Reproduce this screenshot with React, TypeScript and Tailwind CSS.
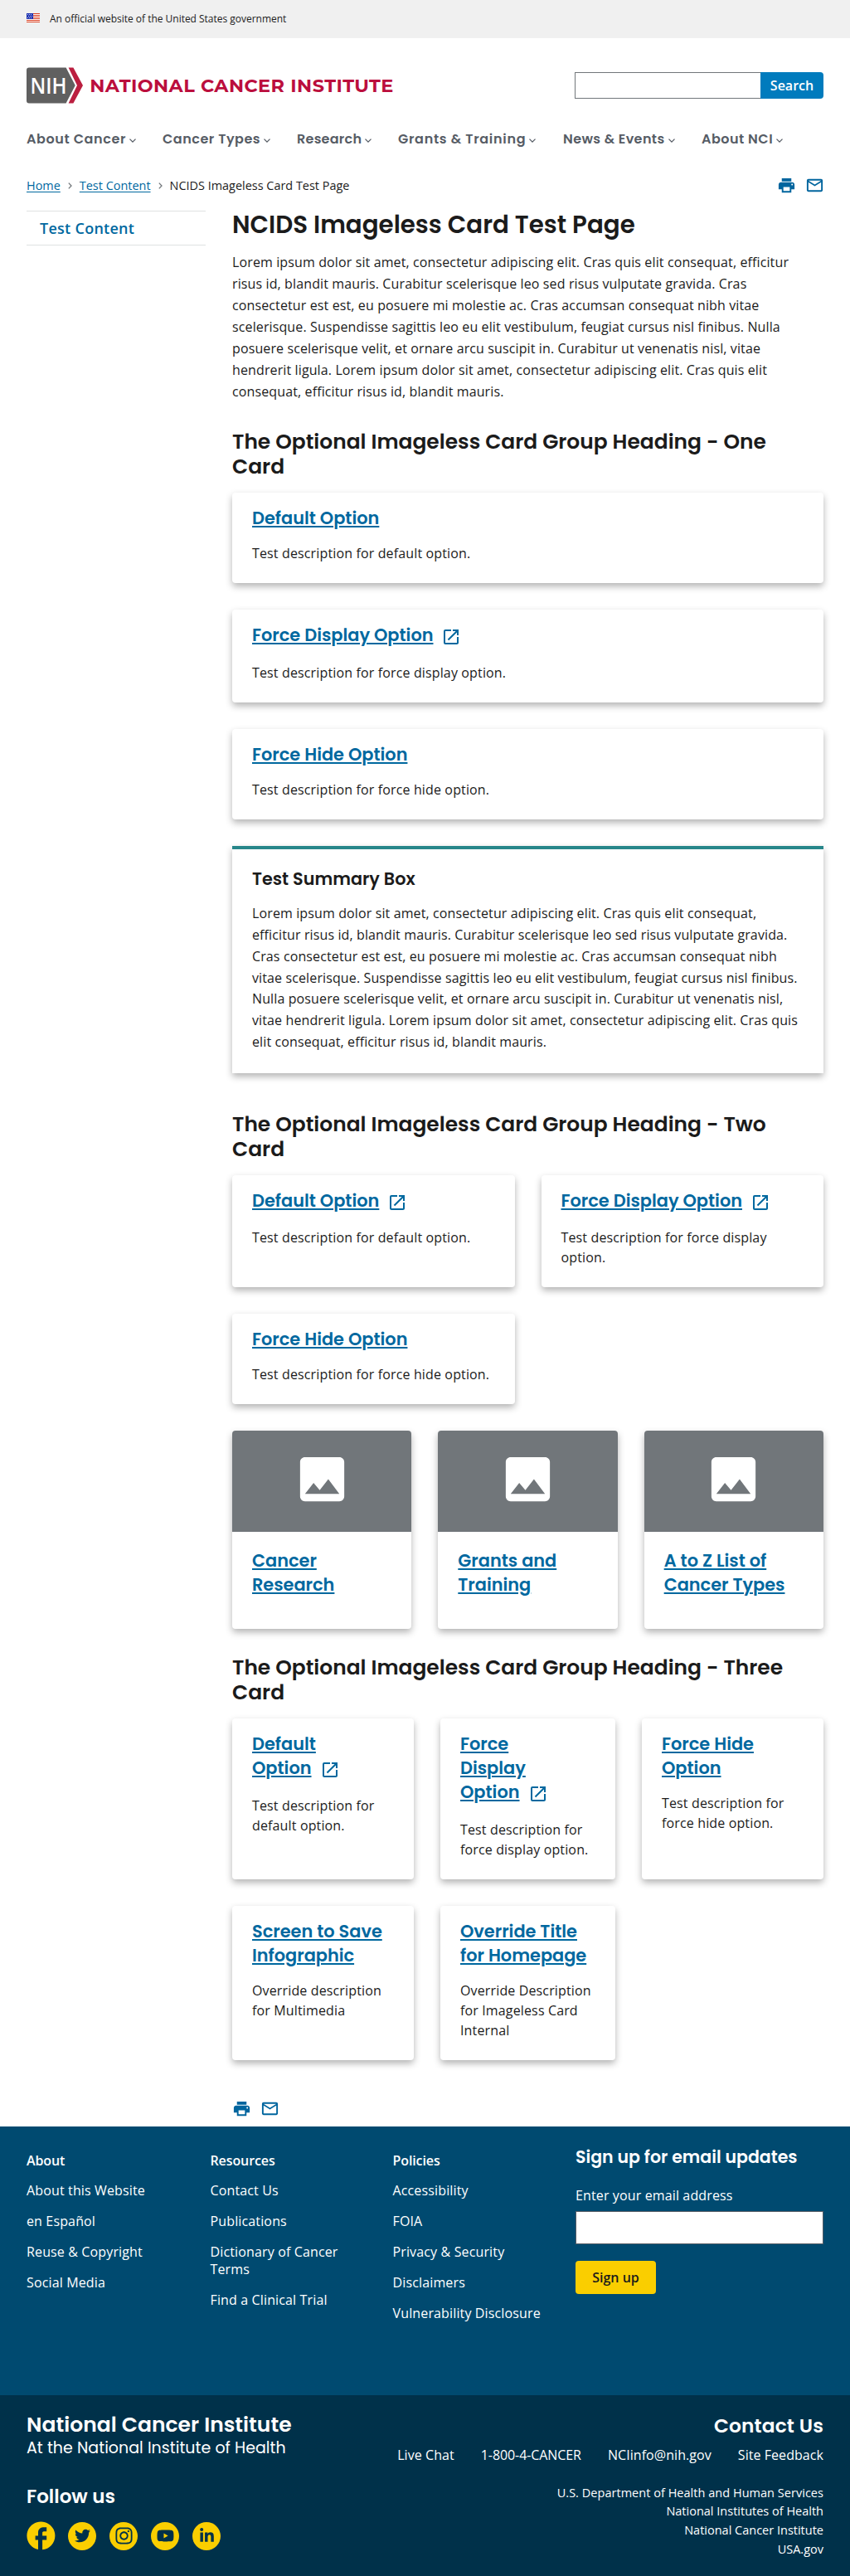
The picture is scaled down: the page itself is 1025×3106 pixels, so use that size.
import type { ReactNode } from "react";
import { MdPrint, MdMailOutline, MdLaunch, MdImage, MdFacebook } from "react-icons/md";
import { FaTwitter, FaInstagram, FaYoutube, FaLinkedinIn } from "react-icons/fa";

const LOREM =
  "Lorem ipsum dolor sit amet, consectetur adipiscing elit. Cras quis elit consequat, efficitur risus id, blandit mauris. Curabitur scelerisque leo sed risus vulputate gravida. Cras consectetur est est, eu posuere mi molestie ac. Cras accumsan consequat nibh vitae scelerisque. Suspendisse sagittis leo eu elit vestibulum, feugiat cursus nisl finibus. Nulla posuere scelerisque velit, et ornare arcu suscipit in. Curabitur ut venenatis nisl, vitae hendrerit ligula. Lorem ipsum dolor sit amet, consectetur adipiscing elit. Cras quis elit consequat, efficitur risus id, blandit mauris.";

const NAV = [
  { label: "About Cancer", cls: "w-[164px] tracking-[0.6px]" },
  { label: "Cancer Types", cls: "w-[162px] tracking-[0.52px]" },
  { label: "Research", cls: "w-[122px] tracking-[0.25px]" },
  { label: "Grants & Training", cls: "w-[199px] tracking-[0.68px]" },
  { label: "News & Events", cls: "w-[167px] tracking-[0.4px]" },
  { label: "About NCI", cls: "w-[110px] tracking-[0.5px]" },
];

function Flag() {
  return (
    <svg width="16" height="11" viewBox="0 0 16 11" shapeRendering="crispEdges" aria-hidden="true">
      <rect width="16" height="11" fill="#fff" />
      {[0, 2, 4, 6, 8, 10].map((y) => (
        <rect key={y} y={y} width="16" height="1" fill="#db3e1f" />
      ))}
      <rect width="8" height="7" fill="#1e33b1" />
      {[
        [1, 1], [3, 1], [5, 1], [2, 3], [4, 3], [6, 3], [1, 5], [3, 5], [5, 5],
      ].map(([x, y]) => (
        <rect key={`${x}-${y}`} x={x} y={y} width="1" height="1" fill="#c3c9ee" />
      ))}
    </svg>
  );
}

function Logo() {
  return (
    <svg width="444" height="44" viewBox="0 0 444 44" aria-label="National Cancer Institute">
      <path d="M3 .5H47.6L58.7 22 47.6 43.5H3a3 3 0 0 1-3-3v-37a3 3 0 0 1 3-3Z" fill="#606060" />
      <path d="M50.6 .5H56.4L68 22 56.4 43.5H50.6L61 22Z" fill="#bb1f40" />
      <text x="4.6" y="31.6" fontSize="26.6" fontWeight="600" fill="#fff" textLength="44" lengthAdjust="spacingAndGlyphs" className="font-['Open_Sans',sans-serif]">
        NIH
      </text>
      <text x="76.3" y="29.6" fontSize="22.4" fontWeight="700" fill="#bb0e3d" textLength="366" lengthAdjust="spacing" className="font-['Montserrat',sans-serif]">
        NATIONAL CANCER INSTITUTE
      </text>
    </svg>
  );
}

function PageActions() {
  return (
    <div className="flex gap-[11px] text-[#00659e]">
      <MdPrint className="size-[23px]" />
      <MdMailOutline className="size-[23px]" />
    </div>
  );
}

function Crumb() {
  return (
    <svg width="5" height="8" viewBox="0 0 5 8" className="mx-[9px]" aria-hidden="true">
      <path d="M.8 .6 4 4 .8 7.4" fill="none" stroke="#71767a" strokeWidth="1.3" />
    </svg>
  );
}

function H2({ children, cls }: { children: ReactNode; cls: string }) {
  return (
    <h2 className={`font-['Poppins','Inter',sans-serif] text-[24.95px] leading-[30px] font-semibold ${cls}`}>
      {children}
    </h2>
  );
}

const TITLE_LINK = "text-[#00689f] underline decoration-2 underline-offset-[2px]";

/** Card whose title links out; `lines` holds the title's line breaks. */
function Card({ lines, icon = false, desc }: { lines: string[]; icon?: boolean; desc: ReactNode }) {
  return (
    <div className="rounded bg-white px-6 pt-4 pb-6 shadow-[0_4px_8px_rgba(0,0,0,0.3)]">
      <h3 className="font-['Poppins','Inter',sans-serif] text-[20.87px] leading-[29.1px] font-semibold whitespace-nowrap">
        {lines.map((line, i) => (
          <span key={line} className="block">
            <a className={TITLE_LINK}>{line}</a>
            {icon && i === lines.length - 1 && (
              <MdLaunch className="ml-[10px] inline size-6 align-[-7px] text-[#00689f]" />
            )}
          </span>
        ))}
      </h3>
      <p className={icon ? "mt-[18.4px] leading-6 tracking-[0.14px]" : "mt-4 leading-6 tracking-[0.14px]"}>{desc}</p>
    </div>
  );
}

function FeatureCard({ lines }: { lines: string[] }) {
  return (
    <div className="h-[239px] overflow-hidden rounded bg-white shadow-[0_4px_8px_rgba(0,0,0,0.3)]">
      <div className="flex h-[122px] items-center justify-center bg-[#71767a] pb-[5px]">
        <MdImage className="size-[71px] text-white" />
      </div>
      <h3 className="px-6 pt-[19.5px] font-['Poppins','Inter',sans-serif] text-[20.87px] leading-[29.1px] font-semibold">
        {lines.map((line) => (
          <span key={line} className="block">
            <a className={TITLE_LINK}>{line}</a>
          </span>
        ))}
      </h3>
    </div>
  );
}

function FooterColumn({ title, links, cls }: { title: string; links: string[]; cls: string }) {
  return (
    <div className={cls}>
      <h4 className="leading-[20.8px] font-semibold tracking-[-0.1px]">{title}</h4>
      <ul className="mt-[15.4px] flex flex-col gap-[16.2px] leading-[20.8px] tracking-[0.14px]">
        {links.map((l) => (
          <li key={l}>{l}</li>
        ))}
      </ul>
    </div>
  );
}

function Circle({ children }: { children: ReactNode }) {
  return (
    <span className="flex size-[34px] items-center justify-center rounded-full bg-[#face00] text-[#00314a]">
      {children}
    </span>
  );
}

export default function App() {
  return (
    <div className="flex h-[3106px] w-[1025px] flex-col overflow-hidden bg-white font-['Open_Sans','Noto_Sans',sans-serif] text-base text-[#1b1b1b]">
      <div className="flex h-[46px] shrink-0 items-center gap-3 bg-[#f0f0f0] px-8 text-xs tracking-[-0.02px]">
        <div className="pb-[3px]">
          <Flag />
        </div>
        <span className="pb-px">An official website of the United States government</span>
      </div>

      <header className="shrink-0 px-8 pt-[35px]">
        <div className="flex justify-between">
          <Logo />
          <div className="mt-[6px] flex h-8 w-[300px]">
            <input className="h-8 w-[224px] border border-r-0 border-[#71767a]" />
            <button className="h-8 w-[76px] rounded-r bg-[#007bbd] pb-px font-semibold text-white">Search</button>
          </div>
        </div>
        <nav className="mt-[31px] flex font-['Poppins','Inter',sans-serif] leading-6 font-semibold text-[#565c65]">
          {NAV.map((n) => (
            <a key={n.label} className={`flex items-center whitespace-nowrap ${n.cls}`}>
              {n.label}
              <svg width="8" height="5" viewBox="0 0 8 5" className="mt-[3px] ml-[4px]" aria-hidden="true">
                <path d="M.5 .6 4 4.1 7.5 .6" fill="none" stroke="#565c65" strokeWidth="1.3" />
              </svg>
            </a>
          ))}
        </nav>
        <div className="mt-[31px] flex h-6 items-center justify-between text-[14.45px] leading-6">
          <div className="flex items-center pt-px">
            <a className="text-[#00689f] underline underline-offset-[2px]">Home</a>
            <Crumb />
            <a className="text-[#00689f] underline underline-offset-[2px]">Test Content</a>
            <Crumb />
            <span>NCIDS Imageless Card Test Page</span>
          </div>
          <div className="-mr-[0.7px]">
            <PageActions />
          </div>
        </div>
      </header>

      <div className="mt-[18px] grid shrink-0 grid-cols-[216px_713px] gap-8 px-8">
        <aside className="pt-px">
          <div className="flex h-[42px] items-center border-y border-[#dfe1e2] pl-4 text-lg font-semibold tracking-[0.27px] text-[#00689f]">
            Test Content
          </div>
        </aside>

        <main className="h-[2311px]">
          <h1 className="font-['Poppins','Inter',sans-serif] text-[29.3px] leading-9 font-semibold">
            NCIDS Imageless Card Test Page
          </h1>
          <p className="mt-[15.3px] w-[690px] leading-[25.92px] tracking-[0.12px]">{LOREM}</p>

          <H2 cls="mt-[32.4px]">
            The Optional Imageless Card Group Heading - One
            <br />
            Card
          </H2>
          <div className="mt-[16px] flex flex-col gap-8">
            <Card lines={["Default Option"]} desc="Test description for default option." />
            <Card lines={["Force Display Option"]} icon desc="Test description for force display option." />
            <Card lines={["Force Hide Option"]} desc="Test description for force hide option." />
            <section className="h-[274px] border-t-4 border-[#27868a] px-6 pt-[21.5px] shadow-[0_4px_8px_rgba(0,0,0,0.3)]">
              <h3 className="font-['Poppins','Inter',sans-serif] text-[20.75px] leading-[29.1px] font-semibold">
                Test Summary Box
              </h3>
              <p className="mt-[14.4px] leading-[25.92px] tracking-[0.12px]">{LOREM}</p>
            </section>
          </div>

          <H2 cls="mt-[47.4px]">
            The Optional Imageless Card Group Heading - Two
            <br />
            Card
          </H2>
          <div className="mt-[15.5px] grid grid-cols-2 gap-8">
            <Card lines={["Default Option"]} icon desc="Test description for default option." />
            <Card
              lines={["Force Display Option"]}
              icon
              desc={
                <>
                  Test description for force display
                  <br />
                  option.
                </>
              }
            />
            <Card lines={["Force Hide Option"]} desc="Test description for force hide option." />
          </div>

          <div className="mt-8 grid grid-cols-3 gap-8">
            <FeatureCard lines={["Cancer", "Research"]} />
            <FeatureCard lines={["Grants and", "Training"]} />
            <FeatureCard lines={["A to Z List of", "Cancer Types"]} />
          </div>

          <H2 cls="mt-[31.8px]">
            The Optional Imageless Card Group Heading - Three
            <br />
            Card
          </H2>
          <div className="mt-[16px] grid grid-cols-[219px_211px_219px] gap-8 whitespace-nowrap">
            <Card lines={["Default", "Option"]} icon desc={<>Test description for<br />default option.</>} />
            <Card lines={["Force", "Display", "Option"]} icon desc={<>Test description for<br />force display option.</>} />
            <Card lines={["Force Hide", "Option"]} desc={<>Test description for<br />force hide option.</>} />
            <Card lines={["Screen to Save", "Infographic"]} desc={<>Override description<br />for Multimedia</>} />
            <Card lines={["Override Title", "for Homepage"]} desc={<>Override Description<br />for Imageless Card<br />Internal</>} />
          </div>

          <div className="mt-[47.5px]">
            <PageActions />
          </div>
        </main>
      </div>

      <footer className="flex h-[542px] shrink-0 flex-col text-white">
        <div className="flex h-[324px] bg-[#004a70] px-8 pt-[31px]">
          <FooterColumn
            cls="w-[221.5px] pr-8"
            title="About"
            links={["About this Website", "en Español", "Reuse & Copyright", "Social Media"]}
          />
          <FooterColumn
            cls="w-[220px] pr-[28px]"
            title="Resources"
            links={["Contact Us", "Publications", "Dictionary of Cancer Terms", "Find a Clinical Trial"]}
          />
          <FooterColumn
            cls="w-[220.5px] pr-8"
            title="Policies"
            links={["Accessibility", "FOIA", "Privacy & Security", "Disclaimers", "Vulnerability Disclosure"]}
          />
          <div className="-mt-[8.5px] w-[299px]">
            <h4 className="font-['Poppins','Inter',sans-serif] text-[20.5px] leading-7 font-semibold">
              Sign up for email updates
            </h4>
            <label className="mt-[20.5px] block leading-6 tracking-[0.13px]">Enter your email address</label>
            <input className="mt-[7px] block h-10 w-full border border-[#565c65] bg-white" />
            <button className="mt-[20px] h-10 w-[97px] rounded bg-[#face00] font-semibold text-[#1b1b1b]">
              Sign up
            </button>
          </div>
        </div>

        <div className="flex h-[218px] justify-between bg-[#00314a] px-8 pt-[21px]">
          <div className="font-['Poppins','Inter',sans-serif]">
            <div className="text-[25px] leading-[30px] font-semibold tracking-[0.04px]">National Cancer Institute</div>
            <div className="mt-px text-[19px] leading-6 tracking-[0.03px]">At the National Institute of Health</div>
            <div className="mt-[31.5px] text-[23px] leading-7 font-semibold">Follow us</div>
            <div className="mt-[17px] flex gap-4">
              <span className="-m-[3.4px] size-[40.8px] text-[#face00]">
                <MdFacebook className="size-full" />
              </span>
              <Circle>
                <FaTwitter className="size-[19px]" />
              </Circle>
              <Circle>
                <FaInstagram className="size-[23px]" />
              </Circle>
              <Circle>
                <FaYoutube className="size-[21px]" />
              </Circle>
              <Circle>
                <FaLinkedinIn className="size-[19px]" />
              </Circle>
            </div>
          </div>
          <div className="text-right">
            <div className="mt-[2px] font-['Poppins','Inter',sans-serif] text-[23.3px] leading-7 font-semibold tracking-[0.15px]">
              Contact Us
            </div>
            <ul className="mt-[9px] flex gap-8 leading-6">
              <li className="tracking-[0.06px]">Live Chat</li>
              <li className="tracking-[-0.08px]">1-800-4-CANCER</li>
              <li className="tracking-[0.06px]">NCIinfo@nih.gov</li>
              <li className="tracking-[0.06px]">Site Feedback</li>
            </ul>
            <ul className="mt-[22.5px] text-[14.5px] leading-[22.7px]">
              <li className="tracking-[0.03px]">U.S. Department of Health and Human Services</li>
              <li>National Institutes of Health</li>
              <li>National Cancer Institute</li>
              <li>USA.gov</li>
            </ul>
          </div>
        </div>
      </footer>
    </div>
  );
}
